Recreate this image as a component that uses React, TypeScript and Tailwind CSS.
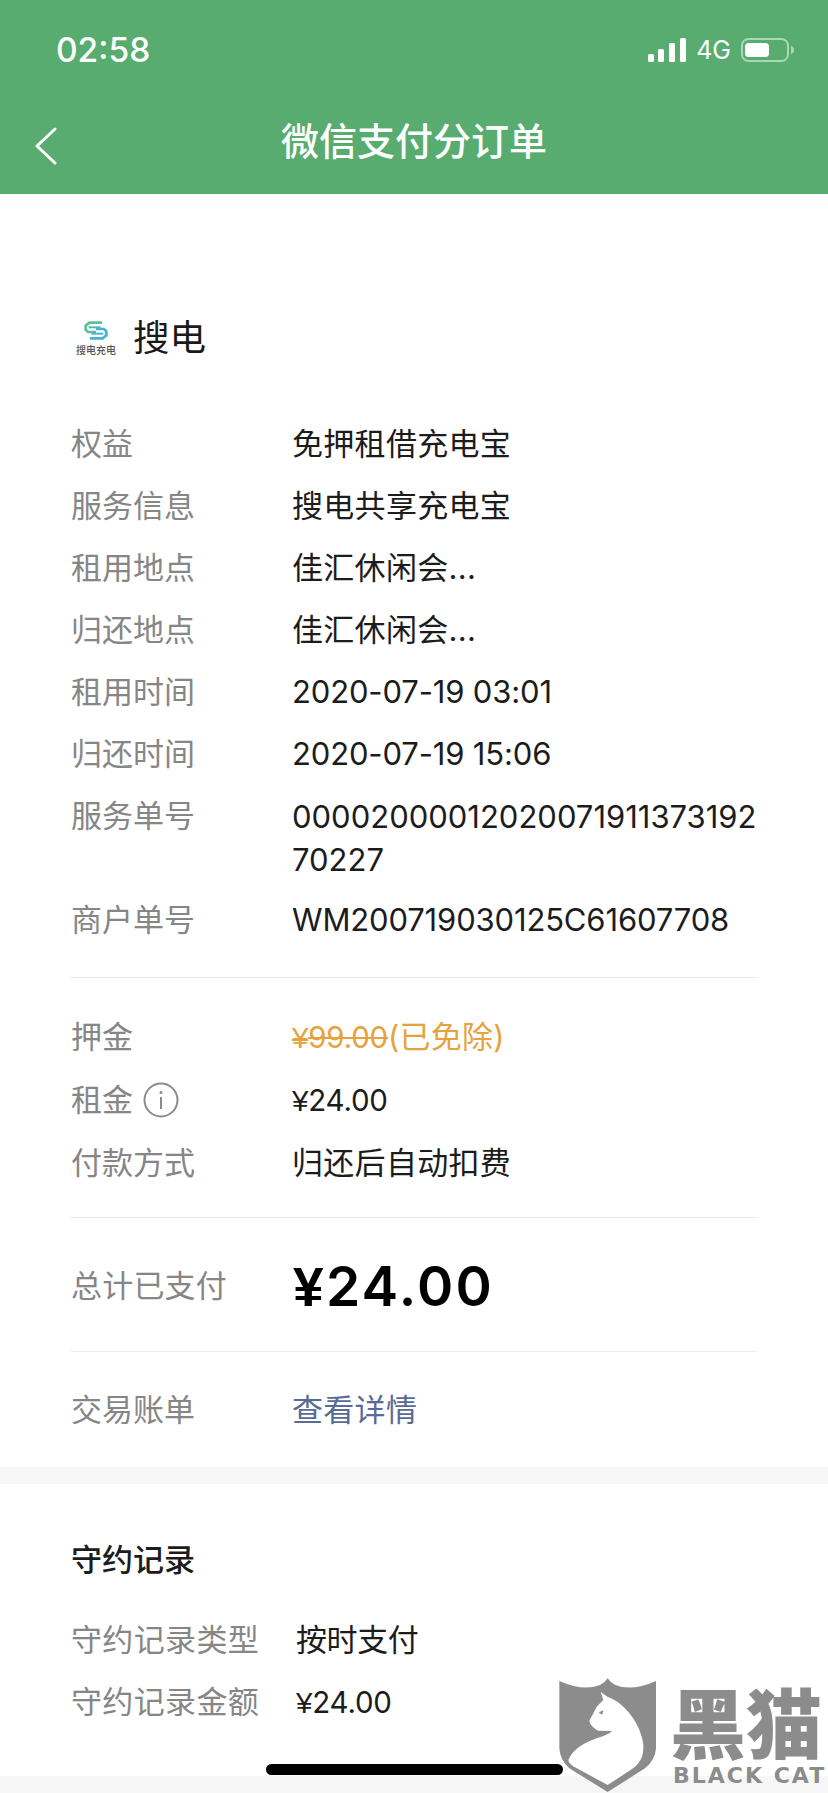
const font = { fontFamily: '"Inter", "Noto Sans CJK SC", sans-serif' };

function Yen() {
  return <span style={{ fontFamily: '"Liberation Sans", sans-serif' }}>¥</span>;
}

function Row({ label, children, labelClass = "w-[221px]" }: { label: React.ReactNode; children: React.ReactNode; labelClass?: string }) {
  return (
    <div className="flex items-start text-[31px] leading-[62px]">
      <div className={`${labelClass} shrink-0 text-[#868686]`}>{label}</div>
      <div className="min-w-0 flex-1 text-[#1c1c1c]">{children}</div>
    </div>
  );
}

function Logo() {
  return (
    <div className="flex w-[64px] flex-col items-center">
      <svg width="24" height="19" viewBox="0 0 72 57" fill="none">
        <path d="M54 5H16L5 14V26L12 33H36" stroke="#5cbf9a" strokeWidth="8" />
        <path d="M18 52H56L67 43V31L60 24H36" stroke="#45b2d6" strokeWidth="8" />
        <path d="M14 19H50" stroke="#4cb9b0" strokeWidth="6" />
        <path d="M22 38H58" stroke="#45b2d6" strokeWidth="6" />
      </svg>
      <div className="mt-[5px] whitespace-nowrap text-[10px] font-medium leading-[10px] text-[#555]">搜电充电</div>
    </div>
  );
}

function Watermark() {
  return (
    <div className="absolute left-[550px] top-[1670px] flex h-[123px] w-[278px] items-start">
      <svg width="120" height="123" viewBox="0 0 360 369" className="shrink-0">
        <path d="M28 33Q100 65 150 45Q165 38 173 25Q181 38 196 45Q246 65 318 33V235Q316 270 285 295L173 366L58 295Q30 270 28 235Z" fill="#8c8c8c" />
        <path d="M152 65L172 80C230 100 275 170 280 225C282 265 265 285 245 298L173 345L68 288Q55 278 55 270C70 235 110 215 140 205C165 197 180 190 186 183L145 182C130 175 118 160 118 152C125 140 132 125 140 110L160 90Z" fill="#fff" />
        <path d="M146 128L160 120L157 134Z" fill="#8c8c8c" />
      </svg>
      <div className="flex w-[158px] flex-col text-[#8c8c8c]">
        <div className="mt-[12px] h-[76px] whitespace-nowrap text-[76px] font-black leading-[76px]" style={{ fontFamily: '"Noto Sans CJK SC", sans-serif' }}>黑猫</div>
        <div className="mt-[6px] whitespace-nowrap pl-[3px] text-[22px] font-bold leading-[24px] tracking-[2px]" style={{ fontFamily: '"DejaVu Sans", sans-serif' }}>BLACK CAT</div>
      </div>
    </div>
  );
}

export default function App() {
  return (
    <div className="relative h-[1793px] w-[828px] overflow-hidden bg-white" style={font}>
      <header className="h-[194px] bg-[#58ac70] text-white">
        <div className="flex h-[100px] items-center justify-between pl-[56px] pr-[34px]">
          <div className="text-[33.5px] font-medium leading-[40px]">02:58</div>
          <div className="flex items-center">
            <svg width="38" height="24" viewBox="0 0 38 24" fill="#fff">
              <rect x="0" y="16" width="6" height="8" rx="1.5" />
              <rect x="10" y="11" width="6" height="13" rx="1.5" />
              <rect x="21" y="5" width="6" height="19" rx="1.5" />
              <rect x="32" y="0" width="6" height="24" rx="1.5" />
            </svg>
            <span className="ml-[10px] text-[25px] leading-[30px]">4G</span>
            <svg width="53" height="24" viewBox="0 0 53 24" className="ml-[10px]">
              <rect x="1" y="1" width="46" height="22" rx="6.5" fill="none" stroke="#fff" strokeOpacity="0.5" strokeWidth="2" />
              <rect x="4" y="5" width="24" height="14" rx="3.5" fill="#fff" />
              <path d="M50 8c2 .6 3 2 3 4s-1 3.4-3 4z" fill="#fff" fillOpacity="0.5" />
            </svg>
          </div>
        </div>
        <div className="relative flex h-[82px] items-center justify-center">
          <svg width="24" height="38" viewBox="0 0 24 38" fill="none" className="absolute left-[34px] top-[27px]">
            <path d="M21 2 3 19l18 17" stroke="#fff" strokeWidth="3" strokeLinecap="round" strokeLinejoin="round" />
          </svg>
          <h1 className="text-[38px] font-medium leading-[48px]">微信支付分订单</h1>
        </div>
      </header>

      <main className="px-[71px]">
        <div className="flex items-center pt-[117px]">
          <div className="-ml-[7px]"><Logo /></div>
          <div className="ml-[5px] text-[36.5px] leading-[54px] text-[#1a1a1a]">搜电</div>
        </div>

        <div className="pt-[48px]">
          <Row label="权益"><span className="tracking-[0.3px]">免押租借充电宝</span></Row>
          <Row label="服务信息"><span className="tracking-[0.3px]">搜电共享充电宝</span></Row>
          <Row label="租用地点"><span className="tracking-[0.3px]">佳汇休闲会...</span></Row>
          <Row label="归还地点"><span className="tracking-[0.3px]">佳汇休闲会...</span></Row>
          <Row label="租用时间"><span className="tracking-[-0.15px]">2020-07-19 03:01</span></Row>
          <Row label="归还时间"><span className="tracking-[-0.15px]">2020-07-19 15:06</span></Row>
          <Row label="服务单号"><div className="break-all pb-[8px] pt-[10px] leading-[43px]">0000200001202007191137319270227</div></Row>
          <Row label="商户单号"><span className="tracking-[-0.15px]">WM200719030125C61607708</span></Row>
        </div>
        <div className="mt-[26px] border-t border-[#e8e8e8] pt-[28px]">
          <Row label="押金">
            <span className="text-[#e6a23c]"><span className="text-[29.5px] tracking-[-0.2px] line-through"><Yen />99.00</span><span className="tracking-[0.2px]">(已免除)</span></span>
          </Row>
          <Row label={
            <span className="flex h-[62px] items-center">
              租金
              <svg width="36" height="36" viewBox="0 0 36 36" fill="none" className="ml-[10px]">
                <circle cx="18" cy="18" r="16.5" stroke="#8a8a8a" strokeWidth="2" />
                <path d="M18 15v12" stroke="#8a8a8a" strokeWidth="2" />
                <circle cx="18" cy="10.5" r="1.5" fill="#8a8a8a" />
              </svg>
            </span>
          }><span className="text-[29.5px] tracking-[-0.2px]"><Yen />24.00</span></Row>
          <Row label="付款方式"><span className="tracking-[0.3px]">归还后自动扣费</span></Row>
        </div>
        <div className="mt-[23px] border-t border-[#e8e8e8]">
          <div className="flex h-[133px] items-center pt-[4px]">
            <div className="w-[221px] text-[31px] tracking-[0.2px] text-[#868686]">总计已支付</div>
            <div className="ml-[1px] text-[55px] font-semibold tracking-[2.3px] text-black"><Yen />24.00</div>
          </div>
        </div>
        <div className="border-t border-[#ededed] pt-[27px]">
          <Row label="交易账单"><span className="tracking-[0.3px] text-[#576b95]">查看详情</span></Row>
        </div>
      </main>

      <div className="mt-[26px] h-[17px] bg-[#f6f6f6]" />

      <section className="px-[71px]">
        <div className="pt-[50px] text-[31px] font-medium leading-[52px] text-[#1c1c1c]">守约记录</div>
        <div className="pt-[23px]">
          <Row label={<span className="tracking-[0.35px]">守约记录类型</span>} labelClass="w-[225px]"><span className="tracking-[-0.4px]">按时支付</span></Row>
          <Row label={<span className="tracking-[0.35px]">守约记录金额</span>} labelClass="w-[225px]"><span className="text-[29.5px] tracking-[-0.2px]"><Yen />24.00</span></Row>
        </div>
      </section>

      <div className="absolute bottom-0 left-0 h-[17px] w-full bg-[#f6f6f6]" />
      <div className="absolute left-[266px] top-[1764px] h-[11px] w-[297px] rounded-full bg-black" />
      <Watermark />
    </div>
  );
}
